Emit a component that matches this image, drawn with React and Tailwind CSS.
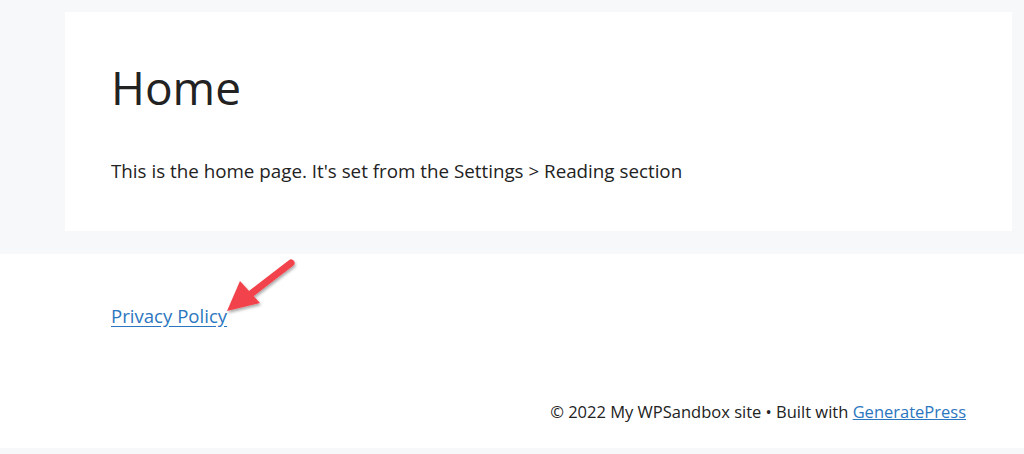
export default function App() {
  return (
    <div className="h-[454px] w-[1024px] overflow-hidden bg-[#f7f8f9] font-['Open_Sans',sans-serif] text-[#222222]">
      {/* content area */}
      <div className="h-[254px] pt-[12px] pl-[65px] pr-[12px]">
        <div className="h-[219px] bg-white pl-[46px] pt-[52px]">
          <h1 className="text-[46px] leading-none font-normal text-[#222222]">Home</h1>
          <p className="mt-[52px] text-[18.8px] leading-none">
            This is the home page. It&apos;s set from the Settings &gt; Reading section
          </p>
        </div>
      </div>

      {/* footer widgets */}
      <div className="relative h-[194px] bg-white">
        <a href="#" className="absolute left-[111px] top-[48px] text-[18.6px] leading-[28px] text-[#2b76c0] underline underline-offset-[3px]">
          Privacy Policy
        </a>
        <svg className="absolute left-[221px] top-[2px]" width="86" height="68" viewBox="0 0 86 68">
          <defs>
            <filter id="sh" x="-30%" y="-30%" width="160%" height="160%">
              <feDropShadow dx="1" dy="2" stdDeviation="1.5" floodColor="#000" floodOpacity="0.35" />
            </filter>
          </defs>
          <g filter="url(#sh)">
            <line x1="70" y1="7" x2="31" y2="37" stroke="#f2434b" strokeWidth="7" strokeLinecap="round" />
            <polygon points="6,55 19,25 39,47" fill="#f2434b" />
          </g>
        </svg>
        <div className="absolute right-[58px] top-[146px] text-[16.5px]">
          © 2022 My WPSandbox site • Built with{' '}
          <a href="#" className="text-[#2b76c0] underline">GeneratePress</a>
        </div>
      </div>
    </div>
  );
}
